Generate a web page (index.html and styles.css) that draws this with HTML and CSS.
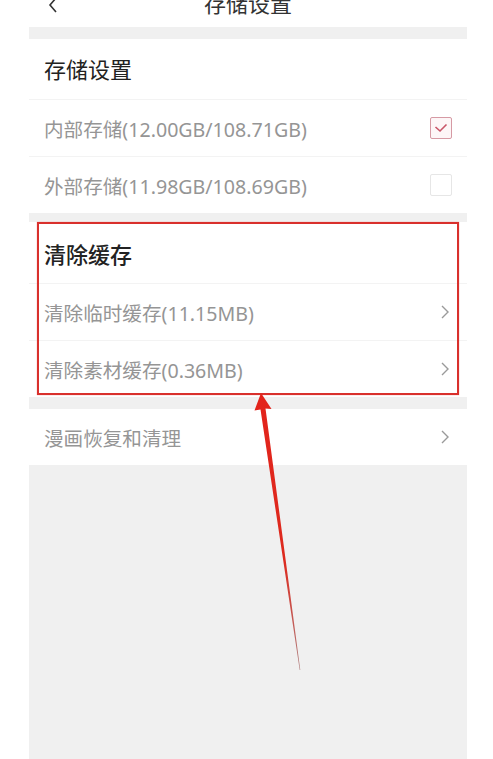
FILE: index.html
```html
<!DOCTYPE html>
<html lang="zh-CN">
<head>
<meta charset="UTF-8">
<meta name="viewport" content="width=device-width, initial-scale=1.0">
<title>存储设置</title>
<link rel="stylesheet" href="styles.css">
</head>
<body>
<div class="column">
    <div class="topbar">
        <div class="topbar-inner">
            <svg class="back" width="12" height="16" viewBox="0 0 12 16">
                <path d="M9 1 L3 8 L9 15" fill="none" stroke="#333" stroke-width="1.6"/>
            </svg>
            <div class="top-title">存储设置</div>
            <div></div>
        </div>
    </div>

    <!-- 存储设置 -->
    <div class="section first">
        <div class="sec-title">存储设置</div>
        <div class="row">
            <span>内部存储(12.00GB/108.71GB)</span>
            <span class="check on">
                <svg width="14" height="10" viewBox="0 0 14 10">
                    <path d="M1.5 4 L6 8 L12.5 1.5" fill="none" stroke="#c95568" stroke-width="1.6"/>
                </svg>
            </span>
        </div>
        <div class="row last">
            <span>外部存储(11.98GB/108.69GB)</span>
            <span class="check"></span>
        </div>
    </div>

    <!-- 清除缓存 -->
    <div class="section second">
        <div class="sec-title">清除缓存</div>
        <div class="row">
            <span>清除临时缓存(11.15MB)</span>
            <svg class="arrow" width="8" height="14" viewBox="0 0 8 14"><path d="M1 1 L7 7 L1 13" fill="none" stroke="#9a9a9a" stroke-width="1.4"/></svg>
        </div>
        <div class="row last">
            <span>清除素材缓存(0.36MB)</span>
            <svg class="arrow" width="8" height="14" viewBox="0 0 8 14"><path d="M1 1 L7 7 L1 13" fill="none" stroke="#9a9a9a" stroke-width="1.4"/></svg>
        </div>
        <div class="mark-box"></div>
    </div>

    <div class="section third">
        <div class="row last">
            <span>漫画恢复和清理</span>
            <svg class="arrow" width="8" height="14" viewBox="0 0 8 14"><path d="M1 1 L7 7 L1 13" fill="none" stroke="#9a9a9a" stroke-width="1.4"/></svg>
        </div>
    </div>
</div>

<!-- 標註箭頭 -->
<svg class="pointer" width="493" height="759" viewBox="0 0 493 759">
    <defs>
        <linearGradient id="shaft" x1="0" y1="393" x2="0" y2="670" gradientUnits="userSpaceOnUse">
            <stop offset="0" stop-color="#e3231b"/>
            <stop offset="0.6" stop-color="#dd2a1e"/>
            <stop offset="1" stop-color="#b08080"/>
        </linearGradient>
    </defs>
    <polygon points="261,393 271.5,409 265.5,408.5 300.3,670 299.7,670 260.5,409.5 254.5,410.5" fill="url(#shaft)"/>
</svg>
</body>
</html>
```

FILE: styles.css
```css
    body, html {
        margin: 0;
        background: #ffffff;
        font-family: "Noto Sans", "Noto Sans CJK SC", sans-serif;
    }

    .column {
        margin-left: 29px;
        width: 438px;
        min-height: 100vh;
        background: #f0f0f0;
        display: flex;
        flex-direction: column;
    }

    .topbar {
        height: 27px;
        overflow: hidden;
        background: #ffffff;
    }

    .topbar-inner {
        margin-top: -18px;
        height: 40px;
        display: grid;
        grid-template-columns: 60px 1fr 60px;
        align-items: center;
    }

    .back {
        margin-left: 18px;
        margin-top: 6px;
    }

    .top-title {
        text-align: center;
        font-size: 22px;
        color: #333;
    }

    .section {
        background: #ffffff;
        position: relative;
    }

    .first {
        margin-top: 12px;
    }

    .second {
        margin-top: 9px;
    }

    .third {
        margin-top: 12px;
    }

    .sec-title {
        height: 60px;
        line-height: 60px;
        padding-left: 15px;
        font-size: 22px;
        color: #222;
        border-bottom: 1px solid #f3f3f3;
    }

    .second .sec-title {
        height: 61px;
        line-height: 64px;
        font-weight: 500;
    }

    .row {
        height: 56px;
        padding: 0 15px;
        display: flex;
        align-items: center;
        justify-content: space-between;
        font-size: 19.6px;
        color: #959595;
        border-bottom: 1px solid #f3f3f3;
    }

    .row.last {
        border-bottom: none;
    }

    .arrow {
        margin-right: 3px;
    }

    .check {
        width: 20px;
        height: 20px;
        border: 1px solid #e6e6e6;
        border-radius: 2px;
        display: flex;
        align-items: center;
        justify-content: center;
    }

    .check.on {
        border-color: #d69aa4;
        background: #fdf6f7;
    }

    .mark-box {
        position: absolute;
        left: 8px;
        right: 8px;
        top: 0;
        bottom: 2px;
        border: 2px solid #d9302c;
        box-shadow: 0 0 1px #e88;
    }

    .pointer {
        position: absolute;
        top: 0;
        left: 0;
        pointer-events: none;
    }
```
